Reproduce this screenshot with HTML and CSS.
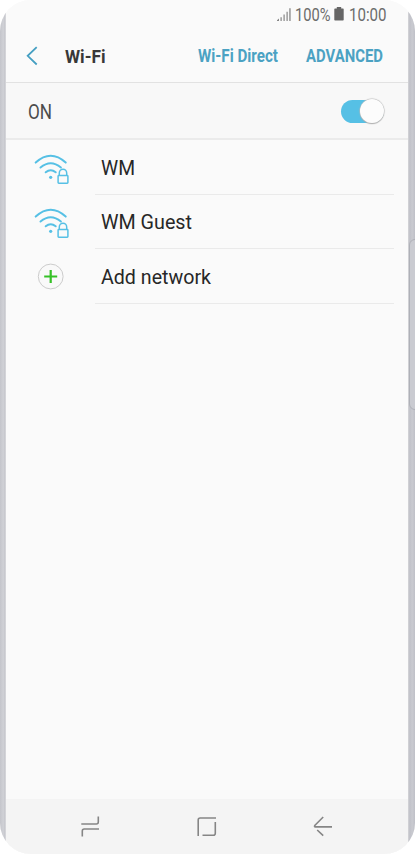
FILE: index.html
```html
<!DOCTYPE html>
<html lang="en">
<head>
<meta charset="utf-8">
<title>Wi-Fi</title>
<link rel="stylesheet" href="styles.css">
</head>
<body>
<svg class="defs" width="0" height="0">
  <symbol id="wifi" viewBox="0 0 36 34">
    <g fill="none" stroke="#56c0e5" stroke-width="2" stroke-linecap="round">
      <path d="M1.700 9.600Q16.700 -4 31.700 9.600"/>
      <path d="M6.500 14.500Q16.700 6 26.900 14.500"/>
      <path d="M11.700 19.300Q16.700 15.100 21.700 19.300"/>
      <path stroke-width="1.5" stroke-linecap="butt" d="M25.300 22V20a3.700 3.700 0 0 1 7.400 0v2"/>
      <rect x="24.100" y="22.500" width="9.800" height="7.800" rx=".7" stroke-width="1.5"/>
    </g>
    <circle cx="16.700" cy="24.300" r="1.600" fill="#56c0e5"/>
  </symbol>
</svg>
<main class="phone">
  <div class="rail left"></div>
  <section class="screen">
    <div class="status">
      <svg class="signal" width="16" height="15" viewBox="0 0 16 15" fill="#858585"><path d="M1 12.2l2-1.7V13H1zM4.500 9.200h1.200V13H4.500zM7.500 6.500h1.200V13H7.500zM10.500 3.800h1.200V13h-1.200zM13.300.2h1.300V13h-1.300z"/></svg>
      <svg class="percent" width="36" height="22"><text x="0" y="15.500" textLength="35.500" lengthAdjust="spacingAndGlyphs">100%</text></svg>
      <svg class="battery" width="10" height="15" viewBox="0 0 10 15"><path d="M2.800 0h4.400v1.400H9q.7 0 .7.8v10.600q0 .7-.7.7H1q-.7 0-.7-.7V2.200q0-.8.7-.8h1.800z" fill="#666"/></svg>
      <svg width="38" height="22"><text x="0" y="15.500" textLength="37.500" lengthAdjust="spacingAndGlyphs">10:00</text></svg>
    </div>
    <header class="header">
      <svg class="back" width="14" height="20" viewBox="0 0 14 20"><path d="M11.700 1.200L2.700 9.800l9 8.700" fill="none" stroke="#459fc2" stroke-width="1.800"/></svg>
      <svg class="title" width="42" height="26"><text x="0" y="20" textLength="40.500" lengthAdjust="spacingAndGlyphs">Wi-Fi</text></svg>
      <svg class="action direct" width="82" height="26"><text x="0" y="19" textLength="80" lengthAdjust="spacingAndGlyphs">Wi-Fi Direct</text></svg>
      <svg class="action" width="78" height="26"><text x="0" y="19" textLength="77" lengthAdjust="spacingAndGlyphs">ADVANCED</text></svg>
    </header>
    <div class="power">
      <svg class="state" width="26" height="26"><text x="0" y="20.500" textLength="24" lengthAdjust="spacingAndGlyphs">ON</text></svg>
      <div class="switch"><div class="knob"></div></div>
    </div>
    <ul class="networks">
      <li><svg class="icon" width="36" height="34"><use href="#wifi"/></svg><div class="name"><svg width="120" height="28"><text x="0" y="21" textLength="34" lengthAdjust="spacingAndGlyphs">WM</text></svg></div></li>
      <li><svg class="icon" width="36" height="34"><use href="#wifi"/></svg><div class="name"><svg width="120" height="28"><text x="0" y="21" textLength="91" lengthAdjust="spacingAndGlyphs">WM Guest</text></svg></div></li>
      <li><svg class="icon" width="36" height="34" viewBox="0 0 36 34"><circle cx="16.700" cy="14.500" r="12.400" fill="#f9f9f9" stroke="#ccc"/><path d="M10.200 14.500h13M16.700 8v13" stroke="#35c126" stroke-width="2.200"/></svg><div class="name"><svg width="120" height="28"><text x="0" y="21" textLength="110" lengthAdjust="spacingAndGlyphs">Add network</text></svg></div></li>
    </ul>
    <nav class="nav">
      <svg width="20" height="22" viewBox="0 0 20 22"><path d="M17.300 .500v5.500q0 2-2 2H.300M1.300 20.500v-5.500q0-2 2-2H18"/></svg>
      <svg width="20" height="22" viewBox="0 0 20 22"><path d="M1.200 20V4q0-2 2-2H19M18.300 6v11.300q0 2-2 2H5.500"/></svg>
      <svg width="20" height="22" viewBox="0 0 20 22"><path d="M10.200 1L2 9.200Q.800 10.900 2.500 10.900H19M4.200 14L10.200 19.700"/></svg>
    </nav>
  </section>
  <div class="rail right"><div class="edge"></div></div>
</main>
</body>
</html>
```

FILE: styles.css
```css
* { box-sizing: border-box; }
body {
  margin: 0;
  background: #fff;
  font-family: Roboto, "Liberation Sans", sans-serif;
}
svg { display: block; flex: none; overflow: visible; }
.defs { position: absolute; }
.phone {
  display: grid;
  grid-template-columns: 6px 402px 7px;
  width: 415px;
  height: 854px;
  overflow: hidden;
  border-radius: 31px;
  background: #fafafa;
}
.rail { height: 854px; }
.left { background: linear-gradient(90deg, #c4c5cb, #d0d1d6 55%, #c6c7cd 80%, #dedee1); }
.right {
  padding-top: 239px;
  background: linear-gradient(90deg, #d6d6d9, #c0c1c8 25%, #c9cad0 60%, #bfc0c7);
}
.edge {
  width: 12px;
  height: 171px;
  margin-left: 1px;
  border: 1px solid #aeb0b7;
  border-radius: 6px;
  background: #cacbd1;
}
.screen {
  display: flex;
  flex-direction: column;
  height: 854px;
  background: #fafafa;
}
.status {
  display: flex;
  align-items: flex-start;
  height: 30px;
  padding: 5px 0 0 270px;
}
.status text { font-size: 18px; fill: #6c6c6c; }
.signal { margin-top: 3px; }
.percent { margin-left: 3px; }
.battery { margin: 2px 5px 0 3px; }
.header {
  display: flex;
  align-items: center;
  height: 53px;
  padding-left: 18px;
  border-bottom: 1px solid #e2e2e2;
}
.back { margin-left: 0.500px; }
.title { margin-left: 26px; }
.title text { font-size: 19px; font-weight: 700; fill: #383838; }
.direct { margin: 0 26px 0 91.500px; }
.action text { font-size: 17.500px; font-weight: 700; fill: #4ba2c3; }
.power {
  display: flex;
  align-items: center;
  justify-content: space-between;
  height: 57px;
  padding: 0 24px 0 22px;
  border-bottom: 2px solid #ebebeb;
  background: #f8f8f8;
}
.state text { font-size: 20px; fill: #4c4c4c; }
.switch {
  display: flex;
  align-items: center;
  justify-content: flex-end;
  width: 43px;
  height: 23px;
  margin-top: 1px;
  border-radius: 12px;
  background: #56c0e5;
}
.knob {
  flex: none;
  width: 24px;
  height: 24px;
  border-radius: 50%;
  background: #fcfcfc;
  box-shadow: 0 0 1px 0.500px #bbb, 0 1px 1px #aaa;
}
.networks { margin: 0; padding: 0; list-style: none; }
.networks li {
  display: flex;
  align-items: center;
  height: 54.600px;
  padding: 0 14px 0 28px;
}
.icon { margin: 5px 25px 0 0; }
.name {
  flex: 1;
  display: flex;
  align-items: center;
  height: 100%;
  padding: 1.500px 0 0 6px;
  border-bottom: 1px solid #eaeaea;
}
.name text { font-size: 20px; fill: #272727; }
.nav {
  display: grid;
  grid-template-columns: repeat(3, 20px);
  column-gap: 96px;
  height: 55px;
  margin-top: auto;
  padding: 17px 0 0 75px;
  background: #f4f4f4;
}
.nav path { fill: none; stroke: #858585; stroke-width: 1.600; }
```
